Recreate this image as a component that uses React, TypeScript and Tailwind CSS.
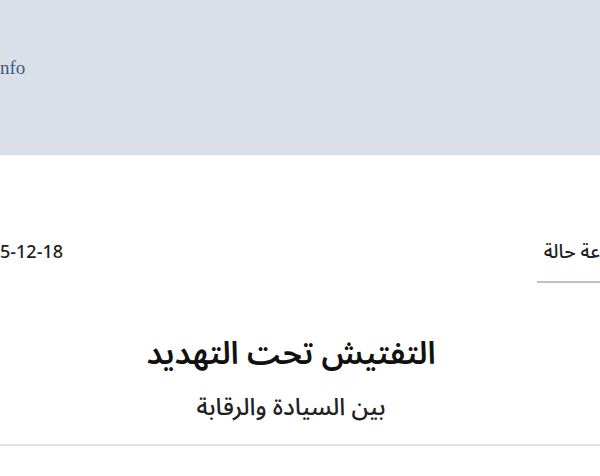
export default function App() {
  return (
    <div className="w-[600px] h-[476px] overflow-hidden bg-white" style={{ fontFamily: '"Noto Sans", "Noto Sans Arabic", sans-serif' }}>
      <header className="h-[155px] bg-[#d9e0e7] pt-[56px]">
        <span className="block text-[19px] leading-[24px] text-[#3d5a80]" style={{ fontFamily: '"Liberation Serif", serif' }}>
          nfo
        </span>
      </header>

      <div className="pt-[84px] flex justify-between items-start">
        <span className="text-[18px] leading-[24px] font-medium text-[#1f1f1f]">5-12-18</span>
        <div dir="rtl" className="w-[63px] border-b-2 border-[#b9c3cb] pb-[18px]">
          <span className="block whitespace-nowrap text-[19px] leading-[24px] font-medium text-[#1f1f1f]">عة حالة</span>
        </div>
      </div>

      <div dir="rtl" className="pr-[18px] flex flex-col items-center">
        <h1 className="mt-[47px] text-[31.5px] leading-[44px] font-semibold text-[#111]">التفتيش تحت التهديد</h1>
        <p className="mt-[16px] text-[24px] leading-[32px] font-medium text-[#222]">بين السيادة والرقابة</p>
      </div>
      <div className="mt-[22px] h-[2px] bg-[#dfe5ea]" />
    </div>
  );
}
